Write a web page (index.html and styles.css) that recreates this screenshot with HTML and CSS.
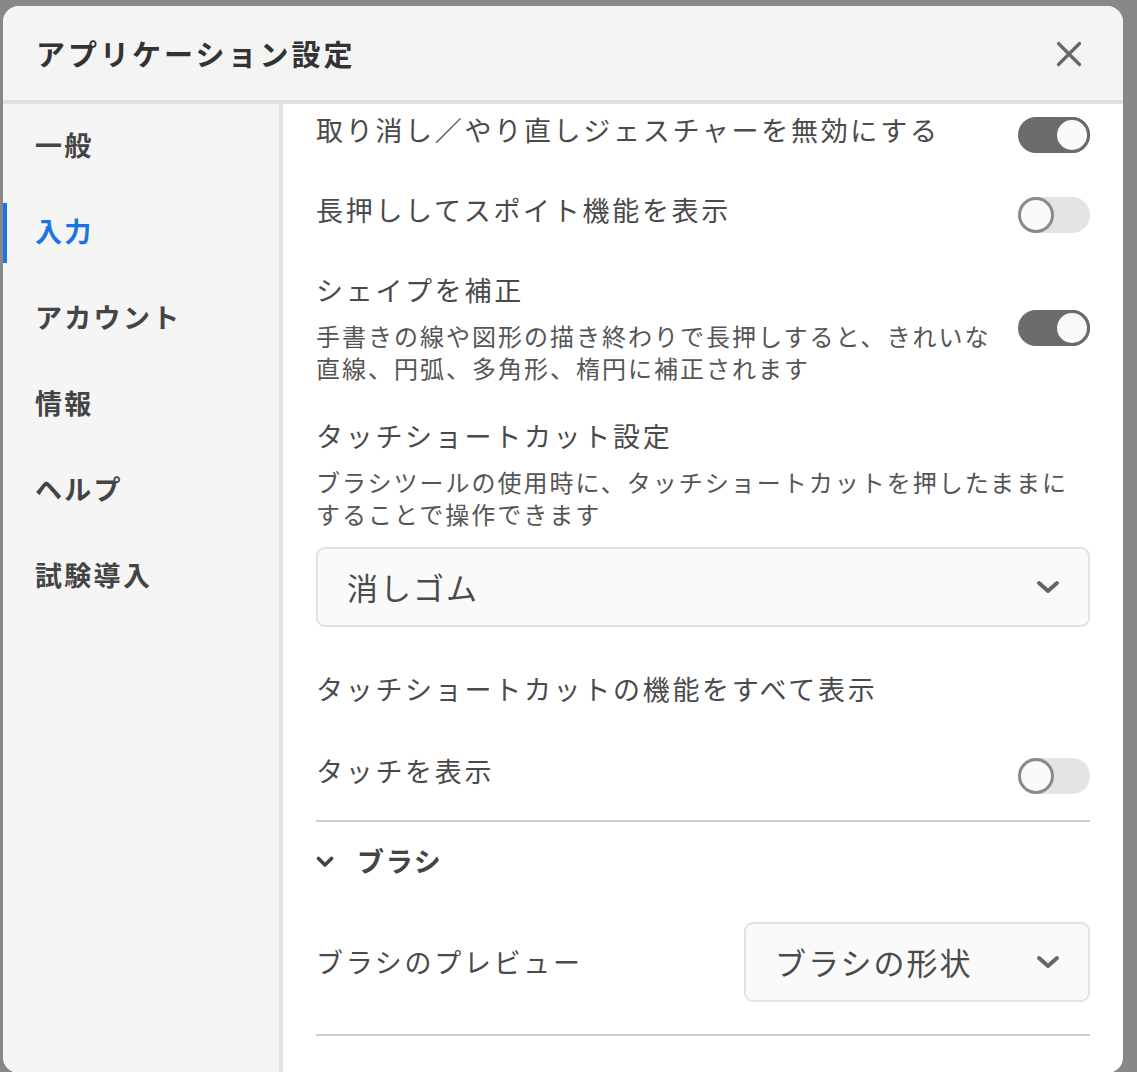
FILE: index.html
```html
<!DOCTYPE html>
<html lang="ja">
<head>
<meta charset="utf-8">
<title>アプリケーション設定</title>
<link rel="stylesheet" href="styles.css">
</head>
<body>
<div class="dialog">
  <header class="dialog-header">
    <h1 class="dialog-title">アプリケーション設定</h1>
    <button class="close-btn" aria-label="閉じる">
      <svg width="26" height="26" viewBox="0 0 26 26"><path d="M2.5 2.5 L23.5 23.5 M23.5 2.5 L2.5 23.5" stroke="#666" stroke-width="3.2" stroke-linecap="round" fill="none"/></svg>
    </button>
  </header>
  <div class="dialog-body">
    <nav class="sidebar">
      <div class="nav-item">一般</div>
      <div class="nav-item active">入力</div>
      <div class="nav-item">アカウント</div>
      <div class="nav-item">情報</div>
      <div class="nav-item">ヘルプ</div>
      <div class="nav-item">試験導入</div>
    </nav>
    <main class="content">
      <div class="row first">
        <div class="label">取り消し／やり直しジェスチャーを無効にする</div>
        <div class="toggle on"><span class="knob"></span></div>
      </div>
      <div class="row">
        <div class="label">長押ししてスポイト機能を表示</div>
        <div class="toggle"><span class="knob"></span></div>
      </div>
      <div class="row has-desc">
        <div class="text">
          <div class="label">シェイプを補正</div>
          <div class="desc">手書きの線や図形の描き終わりで長押しすると、きれいな<br>直線、円弧、多角形、楕円に補正されます</div>
        </div>
        <div class="toggle on"><span class="knob"></span></div>
      </div>
      <div class="block">
        <div class="label">タッチショートカット設定</div>
        <div class="desc">ブラシツールの使用時に、タッチショートカットを押したままに<br>することで操作できます</div>
        <div class="select wide">
          <span class="select-text">消しゴム</span>
          <svg class="chev" width="24" height="14" viewBox="0 0 24 14"><path d="M3 3 L12 11 L21 3" stroke="#666" stroke-width="4" stroke-linecap="round" stroke-linejoin="round" fill="none"/></svg>
        </div>
      </div>
      <div class="row">
        <div class="label">タッチショートカットの機能をすべて表示</div>
      </div>
      <div class="row last">
        <div class="label">タッチを表示</div>
        <div class="toggle"><span class="knob"></span></div>
      </div>
      <hr class="divider">
      <div class="section-head">
        <svg class="sec-chev" width="18" height="12" viewBox="0 0 18 12"><path d="M2.5 2.5 L9 9 L15.5 2.5" stroke="#444" stroke-width="3.6" stroke-linecap="round" stroke-linejoin="round" fill="none"/></svg>
        <span>ブラシ</span>
      </div>
      <div class="row select-row">
        <div class="label">ブラシのプレビュー</div>
        <div class="select narrow">
          <span class="select-text">ブラシの形状</span>
          <svg class="chev" width="24" height="14" viewBox="0 0 24 14"><path d="M3 3 L12 11 L21 3" stroke="#666" stroke-width="4" stroke-linecap="round" stroke-linejoin="round" fill="none"/></svg>
        </div>
      </div>
      <hr class="divider bottom">
    </main>
  </div>
</div>
</body>
</html>
```
FILE: styles.css
```css
* { box-sizing: border-box; }
html, body { margin: 0; padding: 0; }
body {
  background: #888888;
  padding: 6px 14px 0 3px;
  font-family: "Noto Sans CJK JP", "Noto Sans", sans-serif;
  overflow: hidden;
  height: 1072px;
}
.dialog {
  width: 1120px;
  height: 1067px;
  border-radius: 16px;
  overflow: hidden;
  background: #fff;
  display: flex;
  flex-direction: column;
}
.dialog-header {
  height: 98px;
  flex: none;
  background: #f4f4f4;
  border-bottom: 4px solid #e1e1e1;
  display: flex;
  align-items: center;
  justify-content: space-between;
  padding: 0 41px 0 33px;
}
.dialog-title {
  margin: 0;
  font-size: 29px;
  font-weight: 700;
  letter-spacing: 3px;
  color: #333;
  line-height: 40px;
}
.close-btn {
  background: none;
  border: 0;
  padding: 0;
  width: 26px;
  height: 26px;
  display: block;
  margin-top: 2px;
}
.close-btn svg { display: block; }
.dialog-body {
  flex: 1;
  display: flex;
  min-height: 0;
}
.sidebar {
  width: 280px;
  flex: none;
  background: #f5f5f5;
  border-right: 4px solid #e2e2e2;
}
.nav-item {
  height: 86px;
  display: flex;
  align-items: center;
  padding: 0 0 6px 32px;
  font-size: 27px;
  font-weight: 700;
  letter-spacing: 2.3px;
  color: #444;
  position: relative;
}
.nav-item.active { color: #1b74e4; }
.nav-item.active::before {
  content: "";
  position: absolute;
  left: 0;
  top: 13px;
  width: 4px;
  height: 60px;
  background: #1b74e4;
}
.content {
  flex: 1;
  padding: 0 33px;
  background: #fff;
  overflow: hidden;
}
.row {
  display: flex;
  align-items: flex-start;
  justify-content: space-between;
  gap: 24px;
  padding: 22px 0;
}
.row > .toggle { margin-top: 5px; margin-bottom: -5px; }
.row.first { padding-top: 8px; }
.row.has-desc { padding-bottom: 12px; align-items: center; }
.row.has-desc > .toggle { margin: 0; }
.row.last { padding-top: 24px; padding-bottom: 31px; }
.row.select-row { align-items: center; }
.label {
  font-size: 27px;
  letter-spacing: 2.7px;
  line-height: 36px;
  color: #4a4a4a;
  white-space: nowrap;
}
.desc {
  margin-top: 12px;
  font-size: 24px;
  letter-spacing: 2px;
  line-height: 32px;
  color: #555;
  white-space: nowrap;
}
.block { padding: 22px 0; }
.toggle {
  width: 72px;
  height: 36px;
  border-radius: 18px;
  background: #e4e4e4;
  flex: none;
  display: flex;
  justify-content: flex-start;
}
.toggle .knob {
  width: 36px;
  height: 36px;
  border-radius: 50%;
  background: #fafafa;
  border: 3px solid #8a8a8a;
}
.toggle.on {
  background: #6b6b6b;
  justify-content: flex-end;
}
.toggle.on .knob { border-color: #6b6b6b; }
.select {
  height: 80px;
  border: 2px solid #e2e2e2;
  border-radius: 9px;
  background: #fafafa;
  display: flex;
  align-items: center;
  justify-content: space-between;
  padding: 0 28px 0 29px;
  flex: none;
}
.select.wide { margin-top: 17px; }
.select.narrow { width: 346px; }
.select-text {
  font-size: 31px;
  letter-spacing: 2px;
  color: #4a4a4a;
  line-height: 40px;
}
.chev { display: block; }
.divider {
  border: 0;
  height: 2px;
  background: #cfcfcf;
  margin: 0;
}
.divider.bottom { margin-top: 10px; }
.section-head {
  display: flex;
  align-items: center;
  gap: 23px;
  padding: 21px 0 21px;
  font-size: 27px;
  font-weight: 700;
  letter-spacing: 1.7px;
  line-height: 36px;
  color: #444;
}
.sec-chev { display: block; margin-top: 2px; }
```
